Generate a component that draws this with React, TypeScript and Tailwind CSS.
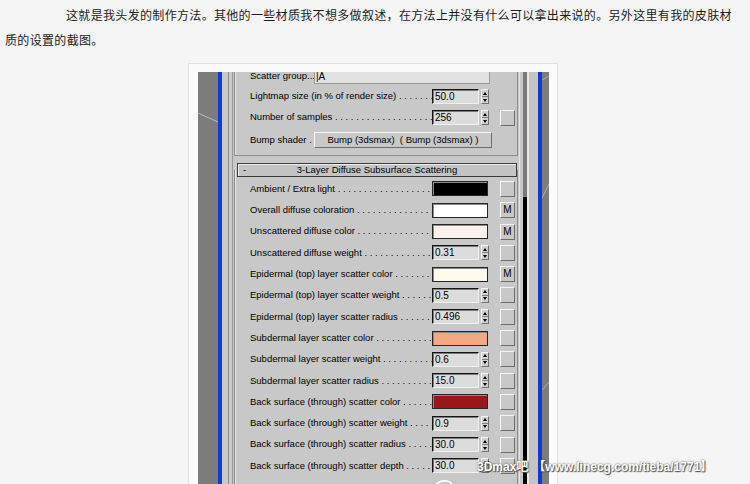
import * as React from "react";

type Row = {
  label: string;
  color?: string;
  value?: string;
  m?: boolean;
};

const rows: Row[] = [
  { label: "Ambient / Extra light", color: "#000000" },
  { label: "Overall diffuse coloration", color: "#ffffff", m: true },
  { label: "Unscattered diffuse color", color: "#fdf1ed", m: true },
  { label: "Unscattered diffuse weight", value: "0.31" },
  { label: "Epidermal (top) layer scatter color", color: "#fffbec", m: true },
  { label: "Epidermal (top) layer scatter weight", value: "0.5" },
  { label: "Epidermal (top) layer scatter radius", value: "0.496" },
  { label: "Subdermal layer scatter color", color: "#f2a984" },
  { label: "Subdermal layer scatter weight", value: "0.6" },
  { label: "Subdermal layer scatter radius", value: "15.0" },
  { label: "Back surface (through) scatter color", color: "#9a1618" },
  { label: "Back surface (through) scatter weight", value: "0.9" },
  { label: "Back surface (through) scatter radius", value: "30.0" },
  { label: "Back surface (through) scatter depth", value: "30.0" },
];

const DOTS = "\u00a0.".repeat(40);

function Label({ text }: { text: string }) {
  return (
    <div className="flex w-[182px] items-center whitespace-nowrap">
      <span>{text}</span>
      <span className="flex-1 overflow-hidden">{DOTS}</span>
    </div>
  );
}

function Spinner() {
  return (
    <div className="ml-[2px] flex h-[15px] w-[8px] flex-col border border-t-[#f4f4f4] border-l-[#f4f4f4] border-b-[#707070] border-r-[#707070] bg-[#d0d0d0]">
      <div className="flex flex-1 items-center justify-center">
        <div className="h-0 w-0 border-x-[2.5px] border-b-[3px] border-x-transparent border-b-black" />
      </div>
      <div className="h-px bg-[#808080]" />
      <div className="flex flex-1 items-center justify-center">
        <div className="h-0 w-0 border-x-[2.5px] border-t-[3px] border-x-transparent border-t-black" />
      </div>
    </div>
  );
}

function NumField({ value }: { value: string }) {
  return (
    <div className="flex w-[57px] items-center">
      <div className="h-[15px] w-[47px] border border-t-[#151515] border-l-[#151515] border-b-[#f0f0f0] border-r-[#f0f0f0] bg-[#dcdcdc] pl-[2px] text-[10px] leading-[13px] shadow-[inset_1px_1px_0_#7a7a7a]">
        {value}
      </div>
      <Spinner />
    </div>
  );
}

function Swatch({ color }: { color: string }) {
  return (
    <div className="flex w-[57px] items-center">
      <div
        className="h-[15px] w-[56px] border border-[#262626] shadow-[inset_1px_1px_0_#8a8a8a]"
        style={{ backgroundColor: color }}
      />
    </div>
  );
}

function MapButton({ m }: { m?: boolean }) {
  return (
    <div className="ml-[11px] flex h-[16px] w-[15px] items-center justify-center border border-t-[#f6f6f6] border-l-[#f6f6f6] border-b-[#6c6c6c] border-r-[#6c6c6c] bg-[#c8c8c8] text-[10px] leading-none">
      {m ? "M" : ""}
    </div>
  );
}

function Viewport({ right }: { right?: boolean }) {
  return (
    <div className={`relative h-full bg-[#7c7c7c] ${right ? "w-[7px]" : "w-[20px]"}`}>
      <svg className="absolute inset-0 h-full w-full" viewBox={right ? "0 0 7 420" : "0 0 20 420"} preserveAspectRatio="none">
        {right ? (
          <>
            <line x1="0" y1="8" x2="7" y2="4" stroke="#8fc7c0" strokeWidth="0.8" />
            <line x1="0" y1="126" x2="7" y2="112" stroke="#9cc8d8" strokeWidth="0.8" />
            <line x1="0" y1="318" x2="7" y2="310" stroke="#9cc8d8" strokeWidth="0.8" />
          </>
        ) : (
          <line x1="0" y1="41" x2="20" y2="50" stroke="#a8d4e4" strokeWidth="0.8" />
        )}
      </svg>
    </div>
  );
}

function SkinPanel() {
  return (
    <div className="flex h-[420px] overflow-hidden">
      <Viewport />
      <div className="w-[4px] bg-[#1238d6]" />
      <div className="w-[6px] bg-[#c8c8c8]" />
      <div className="w-px bg-[#8a8a8a]" />
      <div className="w-[3px] bg-[#cacaca]" />
      <div className="w-px bg-[#9a9a9a]" />

      <div className="w-[286px] bg-[#c8c8c8] font-['Liberation_Sans',Arial,sans-serif] text-[9.5px] text-black">
        {/* first rollout, cut at top */}
        <div className="mx-px border-x border-b border-[#8c8c8c] pb-[4px] pl-[15px] shadow-[inset_1px_0_0_#e6e6e6]">
          <div className="-mt-[4px] flex h-[16px] items-center">
            <div className="w-[64px] whitespace-nowrap">Scatter group...</div>
            <div className="h-[15px] w-[176px] border border-[#9a9a9a] bg-[#e2e2e2] pl-[1px] text-[10px] leading-[13px]">
              |A
            </div>
          </div>
          <div className="mt-[2px] flex h-[21px] items-center">
            <Label text="Lightmap size (in % of render size)" />
            <NumField value="50.0" />
          </div>
          <div className="flex h-[21px] items-center">
            <Label text="Number of samples" />
            <NumField value="256" />
            <MapButton />
          </div>
          <div className="mt-px flex h-[22px] items-center">
            <div className="w-[64px] overflow-hidden whitespace-nowrap">Bump shader{DOTS}</div>
            <div className="flex h-[16px] w-[178px] items-center justify-center border border-t-[#f6f6f6] border-l-[#f6f6f6] border-b-[#6c6c6c] border-r-[#6c6c6c] whitespace-nowrap">
              Bump (3dsmax)&nbsp;&nbsp;( Bump (3dsmax) )
            </div>
          </div>
        </div>

        {/* second rollout */}
        <div className="mt-[7px]">
          <div className="relative z-10 ml-[4px] flex h-[14px] w-[280px] items-center border border-[#3a3a3a] bg-[#c4c4c4] shadow-[inset_1px_1px_0_#eeeeee]">
            <span className="w-[18px] pl-[5px]">-</span>
            <span className="flex-1 pr-[18px] text-center">3-Layer Diffuse Subsurface Scattering</span>
          </div>
          <div className="mx-px -mt-[7px] h-[400px] border-x border-[#8c8c8c] pl-[15px] pt-[8.35px] shadow-[inset_1px_0_0_#e6e6e6]">
            {rows.map((r) => (
              <div key={r.label} className="flex h-[21.3px] items-center">
                <Label text={r.label} />
                {r.color ? <Swatch color={r.color} /> : <NumField value={r.value ?? ""} />}
                <MapButton m={r.m} />
              </div>
            ))}
          </div>
        </div>
      </div>

      <div className="w-[4px] bg-[#c8c8c8] shadow-[inset_1px_0_0_#e4e4e4]" />
      <div className="flex w-[4px] flex-col">
        <div className="h-[125px] bg-[#7a7a7a]" />
        <div className="flex-1 bg-black" />
      </div>
      <div className="w-[2px] bg-[#e8e8e8]" />
      <div className="w-[9px] bg-[#c4c4c4]" />
      <div className="w-[4px] bg-[#1238d6]" />
      <Viewport right />
    </div>
  );
}

export default function App() {
  return (
    <div className="relative h-[484px] w-[750px] overflow-hidden bg-[#f5f5f5]">
      <p className="pl-[5px] pt-[2px] font-['Noto_Sans_CJK_SC',sans-serif] text-[12px] leading-[25px] tracking-[0.33px] text-[#1c1c1c]">
        <span className="pl-[61px]">
          这就是我头发的制作方法。其他的一些材质我不想多做叙述，在方法上并没有什么可以拿出来说的。另外这里有我的皮肤材
        </span>
        <br />
        质的设置的截图。
      </p>

      <div className="ml-[188px] mt-[11px] w-[370px] border border-[#e0e0e0] bg-[#fbfbfb] pl-[9px] pt-[8px] pr-[8px]">
        <SkinPanel />
      </div>

      <div className="absolute left-[477px] top-[458px] flex items-center gap-[5px] font-['Liberation_Sans','Noto_Sans_CJK_SC',sans-serif] text-[12px] font-bold text-white [text-shadow:0_0_2px_#444,1px_1px_1px_#555]">
        <span>3Dmax吧</span>
        <span>【www.linecg.com/tieba/1771】</span>
      </div>
      <svg className="absolute left-[434px] top-[476px]" width="20" height="10" viewBox="0 0 20 10">
        <path d="M2 10 C4 4 14 3 18 8" fill="none" stroke="#ffffff" strokeWidth="1.6" />
      </svg>
    </div>
  );
}
